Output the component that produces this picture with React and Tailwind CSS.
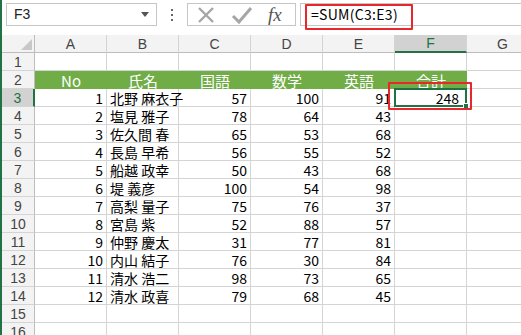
import React from 'react';

const rows = [
  [1, '北野 麻衣子', 57, 100, 91],
  [2, '塩見 雅子', 78, 64, 43],
  [3, '佐久間 春', 65, 53, 68],
  [4, '長島 早希', 56, 55, 52],
  [5, '船越 政幸', 50, 43, 68],
  [6, '堤 義彦', 100, 54, 98],
  [7, '高梨 量子', 75, 76, 37],
  [8, '宮島 紫', 52, 88, 57],
  [9, '仲野 慶太', 31, 77, 81],
  [10, '内山 結子', 76, 30, 84],
  [11, '清水 浩二', 98, 73, 65],
  [12, '清水 政喜', 79, 68, 45],
];

const cols = ['A', 'B', 'C', 'D', 'E', 'F', 'G'];
const heads = ['No', '氏名', '国語', '数学', '英語', '合計'];

const cellFont = { fontFamily: '"Noto Sans CJK JP", "Liberation Sans", sans-serif' };

const Cell = ({ children, align = 'left', className = '' }) => (
  <div
    className={`h-[18px] border-r border-b border-[#d4d4d4] px-[3px] flex items-center text-[14px] text-black overflow-visible whitespace-nowrap leading-none ${
      align === 'right' ? 'justify-end' : 'justify-start'
    } ${className}`}
  >
    {children}
  </div>
);

const RowHead = ({ n, active }) => (
  <div
    className={`h-[18px] border-b border-[#d4d4d4] flex items-center justify-center text-[14px] leading-none font-['Liberation_Sans',sans-serif] ${
      active ? 'bg-[#d2d2d2] text-[#217346] border-r-2 border-r-[#217346]' : 'bg-[#f3f3f3] text-[#444] border-r border-r-[#bdbdbd]'
    }`}
  >
    {n}
  </div>
);

const Toolbar = () => (
  <div className="h-[35px] flex items-start pt-[3px] bg-white">
    <div className="ml-[4px] w-[151px] h-[23px] border border-[#c6c6c6] flex items-center justify-between pl-[7px] pr-[7px]">
      <span className="text-[14px] text-[#222] font-['Liberation_Sans',sans-serif]">F3</span>
      <svg width="8" height="5" viewBox="0 0 8 5">
        <path d="M0 0 L8 0 L4 5 Z" fill="#555" />
      </svg>
    </div>
    <div className="w-[30px] h-[23px] flex flex-col items-center justify-center gap-[3px]">
      <span className="w-[2px] h-[2px] bg-[#666]" />
      <span className="w-[2px] h-[2px] bg-[#666]" />
      <span className="w-[2px] h-[2px] bg-[#666]" />
    </div>
    <div className="w-[109px] h-[23px] border border-[#c6c6c6] flex items-center">
      <svg width="18" height="16" viewBox="0 0 18 16" className="ml-[9px]">
        <path d="M2 1 L16 15 M16 1 L2 15" stroke="#a6a6a6" strokeWidth="2.4" />
      </svg>
      <svg width="22" height="18" viewBox="0 0 22 18" className="ml-[16px]">
        <path d="M2 10 L8 16 L20 2" stroke="#a6a6a6" strokeWidth="3" fill="none" />
      </svg>
      <span className="ml-[15px] text-[19px] italic text-[#555] font-['Liberation_Serif',serif] leading-none">fx</span>
    </div>
    <div className="ml-[4px] flex-1 h-[23px] border border-r-0 border-[#c6c6c6] relative flex items-center">
      <span className="ml-[10px] text-[14px] text-black tracking-[0.3px]" style={cellFont}>
        =SUM(C3:E3)
      </span>
      <div className="absolute left-[4px] top-[0px] w-[108px] h-[26px] border-2 border-[#e8272a] rounded-[1px]" />
    </div>
  </div>
);

export default function App() {
  return (
    <div className="w-[521px] h-[335px] overflow-hidden bg-white border-l-2 border-[#217346]" style={cellFont}>
      <Toolbar />
      <div className="grid grid-cols-[33px_repeat(7,72px)] w-[537px]">
        {/* column headers */}
        <div className="h-[18px] bg-[#f3f3f3] border-r border-b border-[#bdbdbd] flex items-end justify-end p-[2px]">
          <svg width="11" height="11" viewBox="0 0 11 11">
            <path d="M11 0 L11 11 L0 11 Z" fill="#c8c8c8" />
          </svg>
        </div>
        {cols.map((c) => (
          <div
            key={c}
            className={`h-[18px] flex items-center justify-center text-[14px] leading-none font-['Liberation_Sans',sans-serif] border-r border-[#d4d4d4] ${
              c === 'F'
                ? 'bg-[#d2d2d2] text-[#217346] border-b-2 border-b-[#217346]'
                : 'bg-[#f3f3f3] text-[#444] border-b border-b-[#bdbdbd]'
            }`}
          >
            {c}
          </div>
        ))}

        {/* row 1 */}
        <RowHead n={1} />
        {cols.map((c) => (
          <Cell key={c} />
        ))}

        {/* row 2 header */}
        <RowHead n={2} />
        {heads.map((h) => (
          <div key={h} className="h-[18px] bg-[#70ad47] text-white text-[15px] flex items-center justify-center leading-none">
            {h}
          </div>
        ))}
        <Cell />

        {rows.map((r, i) => (
          <React.Fragment key={r[0]}>
            <RowHead n={i + 3} active={i === 0} />
            <Cell align="right">{r[0]}</Cell>
            <Cell>{r[1]}</Cell>
            <Cell align="right">{r[2]}</Cell>
            <Cell align="right">{r[3]}</Cell>
            <Cell align="right">{r[4]}</Cell>
            {i === 0 ? (
              <div className="h-[18px] border-r border-b border-[#d4d4d4] relative">
                <div className="absolute -left-[1px] -top-[1px] -right-[1px] -bottom-[1px] border-2 border-[#217346] flex items-center justify-end pr-[6px] text-[14px] leading-none">
                  248
                </div>
                <div className="absolute -right-[3px] -bottom-[3px] w-[6px] h-[6px] bg-[#217346] border border-white" />
                <div className="absolute -left-[7px] -top-[7px] -right-[6px] -bottom-[4px] border-2 border-[#e8272a] rounded-[1px]" />
              </div>
            ) : (
              <Cell />
            )}
            <Cell />
          </React.Fragment>
        ))}

        {[15, 16].map((n) => (
          <React.Fragment key={n}>
            <RowHead n={n} />
            {cols.map((c) => (
              <Cell key={c} />
            ))}
          </React.Fragment>
        ))}
      </div>
    </div>
  );
}
